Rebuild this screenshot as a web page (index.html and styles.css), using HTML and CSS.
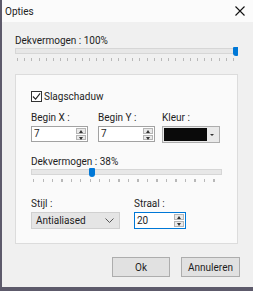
FILE: index.html
```html
<!DOCTYPE html>
<html lang="nl">
<head>
    <meta charset="UTF-8">
    <title>Opties</title>
    <link rel="stylesheet" href="styles.css">
</head>
<body>
    <div class="window">
        <div class="titlebar">
            <span class="title">Opties</span>
            <svg class="close" width="10" height="10" viewBox="0 0 10 10">
                <path d="M0.5 0.5 L9.5 9.5 M9.5 0.5 L0.5 9.5" stroke="#111" stroke-width="1.1"/>
            </svg>
        </div>

        <div class="content">
            <div class="label first">Dekvermogen : 100%</div>
            <div class="slider wide">
                <div class="track"></div>
                <div class="thumb" style="left: 218px"></div>
                <div class="ticks"></div>
            </div>

            <div class="panel">
                <label class="check">
                    <span class="box">
                        <svg width="9" height="9" viewBox="0 0 10 10">
                            <path d="M1 5 L4 8 L9 1.5" fill="none" stroke="#222" stroke-width="1.2"/>
                        </svg>
                    </span>
                    Slagschaduw
                </label>

                <div class="row fields">
                    <div class="field fx">
                        <div class="label">Begin X :</div>
                        <div class="spin">
                            <span class="value">7</span>
                            <span class="arrows"><span class="up"></span><span class="down"></span></span>
                        </div>
                    </div>
                    <div class="field fy">
                        <div class="label">Begin Y :</div>
                        <div class="spin">
                            <span class="value">7</span>
                            <span class="arrows"><span class="up"></span><span class="down"></span></span>
                        </div>
                    </div>
                    <div class="field">
                        <div class="label">Kleur :</div>
                        <div class="color">
                            <span class="swatch"></span>
                            <span class="drop"></span>
                        </div>
                    </div>
                </div>

                <div class="label">Dekvermogen : 38%</div>
                <div class="slider small">
                    <div class="track"></div>
                    <div class="thumb" style="left: 58px"></div>
                    <div class="ticks"></div>
                </div>

                <div class="row bottom">
                    <div class="field fs">
                        <div class="label">Stijl :</div>
                        <div class="select">
                            <span>Antialiased</span>
                            <svg width="9" height="5" viewBox="0 0 9 5">
                                <path d="M0.5 0.5 L4.5 4.5 L8.5 0.5" fill="none" stroke="#555" stroke-width="1"/>
                            </svg>
                        </div>
                    </div>
                    <div class="field">
                        <div class="label">Straal :</div>
                        <div class="spin focus">
                            <span class="value">20</span>
                            <span class="arrows"><span class="up"></span><span class="down"></span></span>
                        </div>
                    </div>
                </div>
            </div>

            <div class="buttons">
                <button class="btn ok">Ok</button>
                <button class="btn">Annuleren</button>
            </div>
        </div>
    </div>
</body>
</html>
```

FILE: styles.css
```css
html, body {
    margin: 0;
    padding: 0;
}

body {
    width: 253px;
    height: 291px;
    overflow: hidden;
    font-family: Roboto, "Liberation Sans", sans-serif;
    font-size: 10px;
    color: #1e1e1e;
    background: #5d5a6b;
}

.window {
    box-sizing: border-box;
    width: 251px;
    height: 287px;
    margin-left: 2px;
    background: #f0f0f0;
    display: flex;
    flex-direction: column;
}

.titlebar {
    height: 22px;
    background: #fbfbfb;
    display: flex;
    align-items: center;
    justify-content: space-between;
    padding: 0 8px 0 3px;
}

.title {
    font-size: 10px;
    color: #222;
}

.content {
    padding: 0 13px;
    display: flex;
    flex-direction: column;
    align-items: flex-start;
}

.label {
    line-height: 12px;
    height: 12px;
    white-space: nowrap;
}

.label.first {
    margin-top: 13px;
}

/* sliders */
.slider {
    position: relative;
    height: 14px;
    margin-top: 1px;
    overflow: hidden;
    padding-top: 1px;
    box-sizing: border-box;
}

.slider.wide {
    width: 223px;
    margin-top: 0;
}

.slider.small {
    width: 191px;
    margin-top: 0;
}

.track {
    position: absolute;
    left: 0;
    top: 1px;
    width: 100%;
    height: 6px;
    box-sizing: border-box;
    background: #e7e7e7;
    border: 1px solid #d6d6d6;
}

.thumb {
    position: absolute;
    top: 0;
    width: 6px;
    height: 9px;
    background: #0078d7;
    border-radius: 1px 1px 3px 3px;
}

.ticks {
    position: absolute;
    left: 2px;
    width: calc(100% - 4px);
    top: 11px;
    height: 3px;
    background: repeating-linear-gradient(to right, #b8b8b8 0 1px, transparent 1px 7.2px);
}

.small .ticks {
    background: repeating-linear-gradient(to right, #b8b8b8 0 1px, transparent 1px 9.5px);
}

/* panel */
.panel {
    margin-top: 13px;
    width: 223px;
    height: 170px;
    box-sizing: border-box;
    border: 1px solid #dcdcdc;
    background: #fafafa;
    padding: 15px 15px 0 15px;
    display: flex;
    flex-direction: column;
    align-items: flex-start;
}

.check {
    display: flex;
    align-items: center;
    gap: 2px;
    height: 12px;
}

.box {
    box-sizing: border-box;
    width: 11px;
    height: 11px;
    border: 1px solid #333;
    background: #fff;
    display: flex;
    align-items: center;
    justify-content: center;
}

.row {
    display: flex;
}

.fields {
    margin-top: 10px;
    margin-bottom: 13px;
}

.fx {
    width: 67px;
}

.fy {
    width: 64px;
}

.field .label {
    margin-bottom: 2px;
}

.spin {
    box-sizing: border-box;
    width: 57px;
    height: 16px;
    border: 1px solid #a2a2a2;
    background: #fff;
    display: flex;
    justify-content: space-between;
    align-items: stretch;
}

.spin.focus {
    width: 52px;
    height: 17px;
    border-color: #0078d7;
}

.value {
    padding-left: 2px;
    line-height: 14px;
}

.focus .value {
    line-height: 15px;
}

.arrows {
    width: 10px;
    display: flex;
    flex-direction: column;
    gap: 1px;
    padding: 1px 1px 1px 0;
}

.up, .down {
    flex: 1;
    border: 1px solid #b5b5b5;
    background: #e9e9e9;
    position: relative;
}

.up::after, .down::after {
    content: "";
    position: absolute;
    left: 2px;
    top: 1px;
    border-left: 2px solid transparent;
    border-right: 2px solid transparent;
}

.up::after {
    border-bottom: 3px solid #333;
}

.down::after {
    border-top: 3px solid #333;
}

.color {
    box-sizing: border-box;
    width: 58px;
    height: 17px;
    border: 1px solid #adadad;
    background: #e9e9e9;
    display: flex;
    padding: 1px;
}

.swatch {
    flex: 1;
    background: #0a0a0a;
}

.drop {
    width: 11px;
    position: relative;
}

.drop::after {
    content: "";
    position: absolute;
    left: 3px;
    top: 6px;
    border-left: 2px solid transparent;
    border-right: 2px solid transparent;
    border-top: 2px solid #333;
}

.bottom {
    margin-top: 16px;
}

.fs {
    width: 103px;
}

.select {
    box-sizing: border-box;
    width: 89px;
    height: 17px;
    border: 1px solid #d0d0d0;
    background: #e5e5e5;
    display: flex;
    align-items: center;
    justify-content: space-between;
    padding: 0 5px 0 4px;
}

/* buttons */
.buttons {
    display: flex;
    justify-content: flex-end;
    gap: 11px;
    margin-top: 13px;
    align-self: stretch;
}

.btn {
    box-sizing: border-box;
    width: 59px;
    height: 20px;
    border: 1px solid #adadad;
    background: #e1e1e1;
    font-family: Roboto, "Liberation Sans", sans-serif;
    font-size: 10px;
    color: #1e1e1e;
    padding: 0;
}

.btn.ok {
    width: 58px;
}
```
